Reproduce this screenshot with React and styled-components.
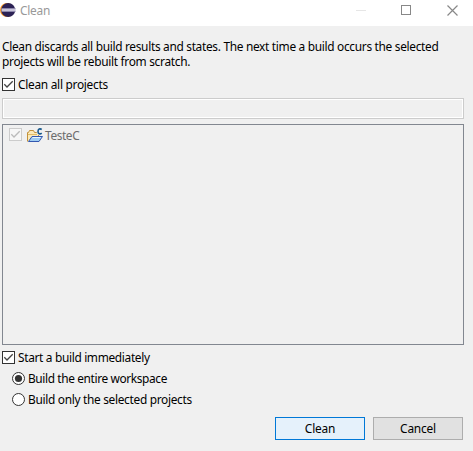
import React from "react";
import styled, { createGlobalStyle } from "styled-components";

const GlobalStyle = createGlobalStyle`
  * { box-sizing: border-box; }
  html, body { margin: 0; padding: 0; overflow: hidden; }
  body { font-family: "Noto Sans", "Open Sans", sans-serif; font-size: 11.9px; color: #000; }
  svg { display: block; flex: none; }
`;

const Dialog = styled.div`
  width: 473px;
  height: 451px;
  display: flex;
  flex-direction: column;
  background: #f0f0f0;
`;

const TitleBar = styled.header`
  display: flex;
  height: 26px;
  flex: none;
  background: #fff;
  padding: 2px 15px 0 0;
`;

const Title = styled.span`
  flex: 1;
  margin-left: 4px;
  color: #999;
  line-height: 17px;
  letter-spacing: ${(p) => p.$spacing}px;
`;

const WindowControls = styled.div`
  display: flex;
  gap: 34px;
  padding-top: 3px;
`;

const Body = styled.main`
  display: flex;
  flex-direction: column;
  padding: 13px 9px 0 2px;
`;

const Message = styled.p`
  margin: 0;
  height: 39px;
  line-height: 15px;
  white-space: nowrap;
`;

const Line = styled.span`
  display: block;
  letter-spacing: ${(p) => p.$spacing}px;
`;

const Option = styled.label`
  display: flex;
  align-items: center;
  height: 13px;
  gap: 3px;
  margin-left: ${(p) => p.$indent || 0}px;
  margin-bottom: ${(p) => p.$after || 0}px;
`;

const Label = styled.span`
  white-space: nowrap;
  line-height: 13px;
  color: ${(p) => (p.$muted ? "#6d6d6d" : "#000")};
  letter-spacing: ${(p) => p.$spacing}px;
`;

const Filter = styled.input`
  display: block;
  width: 100%;
  height: 21px;
  margin: 0 0 5px;
  padding: 0;
  border: 1px solid #ccc;
  border-radius: 0;
  background: #f0f0f0;
  box-shadow: inset 0 0 0 1px #fff;
`;

const ProjectList = styled.div`
  height: 221px;
  margin-bottom: 6px;
  border: 1px solid #828790;
  padding: 3px 6px;
`;

const ProjectRow = styled.div`
  display: flex;
  align-items: flex-start;
  height: 16px;

  & > svg + svg { margin-left: 5px; }
  & > span { margin: 1px 0 0 2px; }
`;

const Actions = styled.footer`
  display: flex;
  justify-content: flex-end;
  gap: 8px;
  padding: 11px 1px 0 0;
`;

const Button = styled.button`
  width: 90px;
  height: 23px;
  padding: 0;
  border: 1px solid ${(p) => (p.$primary ? "#0078d7" : "#adadad")};
  border-radius: 0;
  background: ${(p) => (p.$primary ? "#e5f1fb" : "#e1e1e1")};
  color: #000;
  font: inherit;
  line-height: 21px;
  letter-spacing: ${(p) => p.$spacing}px;
`;

const Check = ({ disabled }) => (
  <svg width="13" height="13" viewBox="0 0 13 13">
    <rect x=".5" y=".5" width="12" height="12" fill={disabled ? "#f7f7f7" : "#fff"} stroke={disabled ? "#ccc" : "#333"} />
    <path d="M2.3 6.3 5 9 10.7 3.3" fill="none" stroke={disabled ? "#bbb" : "#444"} strokeWidth="1.3" />
  </svg>
);

const Radio = ({ checked }) => (
  <svg width="13" height="13" viewBox="0 0 13 13">
    <circle cx="6.5" cy="6.5" r="6" fill="#fff" stroke="#333" />
    {checked && <circle cx="6.5" cy="6.5" r="3.6" fill="#333" />}
  </svg>
);

const EclipseIcon = () => (
  <svg width="16" height="16" viewBox="0 0 16 16">
    <circle cx="7" cy="8" r="7" fill="#f7941e" />
    <circle cx="8.2" cy="8" r="7" fill="#2c2255" />
    <path d="M1.5 6.5h14M1.5 9.5h14" stroke="#8c86aa" />
    <path d="M1.5 7.5h14M1.5 8.5h14" stroke="#c9c5da" />
  </svg>
);

const ProjectIcon = () => (
  <svg width="16" height="16" viewBox="0 0 16 16">
    <path d="M.5 13.5v-9h1l1-2h4l1 2h4v5" fill="#fbeab8" stroke="#c2913c" />
    <path d="M1 6.5h9" stroke="#e2bc66" />
    <path d="M1.5 13.5 5 8.5h10.5l-3.5 5Z" fill="#9fcdf2" stroke="#3458b0" />
    <path d="M5.5 9.5h8" stroke="#e7f5fe" />
    <path d="M14.7 1.5C12.9.2 11 1 11 3.4s2 3.1 3.7 1.7" fill="none" stroke="#f0f0f0" strokeWidth="3" />
    <path d="M14.7 1.5C12.9.2 11 1 11 3.4s2 3.1 3.7 1.7" fill="none" stroke="#17588b" strokeWidth="1.6" />
  </svg>
);

export default function App() {
  return (
    <>
      <GlobalStyle />
      <Dialog>
        <TitleBar>
          <EclipseIcon />
          <Title $spacing={-0.25}>Clean</Title>
          <WindowControls>
            <svg width="11" height="11"><path d="M0 5.5h10" stroke="#e6e6e6" /></svg>
            <svg width="12" height="11"><rect x=".5" y=".5" width="9" height="9" fill="none" stroke="#888" /></svg>
            <svg width="11" height="11"><path d="m.5.5 10 10m0-10-10 10" stroke="#888" strokeWidth="1.2" /></svg>
          </WindowControls>
        </TitleBar>
        <Body>
          <Message>
            <Line $spacing={-0.31}>Clean discards all build results and states. The next time a build occurs the selected</Line>
            <Line $spacing={-0.3}>projects will be rebuilt from scratch.</Line>
          </Message>
          <Option $after={7}>
            <Check />
            <Label $spacing={-0.28}>Clean all projects</Label>
          </Option>
          <Filter disabled />
          <ProjectList>
            <ProjectRow>
              <Check disabled />
              <ProjectIcon />
              <Label $muted $spacing={-0.4}>TesteC</Label>
            </ProjectRow>
          </ProjectList>
          <Option $after={8}>
            <Check />
            <Label $spacing={-0.33}>Start a build immediately</Label>
          </Option>
          <Option $indent={10} $after={8}>
            <Radio checked />
            <Label $spacing={-0.38}>Build the entire workspace</Label>
          </Option>
          <Option $indent={10}>
            <Radio />
            <Label $spacing={-0.31}>Build only the selected projects</Label>
          </Option>
          <Actions>
            <Button $primary $spacing={-0.2}>Clean</Button>
            <Button $spacing={-0.2}>Cancel</Button>
          </Actions>
        </Body>
      </Dialog>
    </>
  );
}
